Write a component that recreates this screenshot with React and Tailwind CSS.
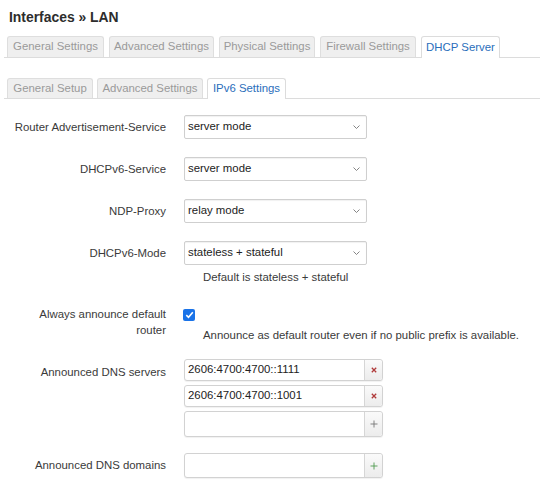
import React from "react";

const FONT = { fontFamily: '"Liberation Sans", Arial, Helvetica, sans-serif' };

function Tab({ label, width, active, h }) {
  if (active) {
    return (
      <div
        className={`flex items-center justify-center bg-white border border-b-0 border-[#dcdcdc] rounded-t-[3px] text-[#2a6ebb] mb-[-1px] ${h === 20 ? "h-[21px]" : "h-[22px]"}`}
        style={{ width }}
      >
        {label}
      </div>
    );
  }
  return (
    <div
      className={`flex items-center justify-center bg-[#efefef] border border-b-0 border-[#dedede] rounded-t-[3px] text-[#9a9a9a] ${h === 20 ? "h-[20px]" : "h-[21px]"}`}
      style={{ width }}
    >
      {label}
    </div>
  );
}

function Select({ value }) {
  return (
    <div className="w-[183px] h-[24px] border border-[#cfcfcf] rounded-[2px] bg-white flex items-center justify-between pl-[3px] pr-[6px] text-[#222] shadow-[inset_0_1px_1px_rgba(0,0,0,0.06)]">
      <span>{value}</span>
      <svg width="7" height="4" viewBox="0 0 7 4" fill="none">
        <path d="M0.5 0.5 L3.5 3.5 L6.5 0.5" stroke="#777" strokeWidth="0.9" />
      </svg>
    </div>
  );
}

function DynInput({ value, kind, h }) {
  return (
    <div
      className="w-[199px] border border-[#d2d2d2] rounded-[3px] bg-white flex shadow-[0_1px_1px_rgba(0,0,0,0.06)]"
      style={{ height: h }}
    >
      <div className="flex-1 flex items-center pl-[3px] text-[#222]">{value}</div>
      <div className="w-[18px] border-l border-[#d6d6d6] bg-gradient-to-b from-[#fafafa] to-[#ececec] rounded-r-[3px] flex items-center justify-center">
        {kind === "x" && (
          <svg width="6" height="6" viewBox="0 0 6 6">
            <path d="M0.8 0.8 L5.2 5.2 M5.2 0.8 L0.8 5.2" stroke="#b03a3a" strokeWidth="1.3" />
          </svg>
        )}
        {kind === "plus" && (
          <svg width="8" height="8" viewBox="0 0 8 8">
            <path d="M4 0.5 V7.5 M0.5 4 H7.5" stroke="#777" strokeWidth="0.9" />
          </svg>
        )}
        {kind === "plusg" && (
          <svg width="8" height="8" viewBox="0 0 8 8">
            <path d="M4 0.5 V7.5 M0.5 4 H7.5" stroke="#4e9a4e" strokeWidth="0.9" />
          </svg>
        )}
      </div>
    </div>
  );
}

function Row({ label, children, className = "", labelClass = "" }) {
  return (
    <div className={`flex ${className}`}>
      <div className={`w-[166px] shrink-0 text-right whitespace-nowrap text-[#3a3a3a] ${labelClass}`}>{label}</div>
      <div className="ml-[18px]">{children}</div>
    </div>
  );
}

export default function App() {
  return (
    <div className="w-[540px] h-[492px] bg-white overflow-hidden text-[11.4px] text-[#333]" style={FONT}>
      <div className="pt-[8px] pl-[9px] text-[13.9px] leading-[18px] font-bold text-[#2d2d2d]">
        Interfaces » LAN
      </div>

      <div className="mt-[10px] ml-[4px] flex items-end gap-[5px] pl-[3px] border-b border-[#dcdcdc]">
        <Tab label="General Settings" width={97} />
        <Tab label="Advanced Settings" width={105} />
        <Tab label="Physical Settings" width={96} />
        <Tab label="Firewall Settings" width={96} />
        <Tab label="DHCP Server" width={79} active />
      </div>

      <div className="mt-[20px] ml-[4px] flex items-end gap-[4px] pl-[3px] border-b border-[#dcdcdc]">
        <Tab label="General Setup" width={86} h={20} />
        <Tab label="Advanced Settings" width={106} h={20} />
        <Tab label="IPv6 Settings" width={79} h={20} active />
      </div>

      <div className="mt-[16px]">
        <Row label="Router Advertisement-Service" labelClass="leading-[24px]">
          <Select value="server mode" />
        </Row>
        <Row label="DHCPv6-Service" className="mt-[18px]" labelClass="leading-[24px]">
          <Select value="server mode" />
        </Row>
        <Row label="NDP-Proxy" className="mt-[18px]" labelClass="leading-[24px]">
          <Select value="relay mode" />
        </Row>
        <Row label="DHCPv6-Mode" className="mt-[18px]" labelClass="leading-[24px]">
          <Select value="stateless + stateful" />
          <div className="mt-[4px] ml-[19px] leading-[16px] text-[#3a3a3a]">Default is stateless + stateful</div>
        </Row>

        <Row
          label={
            <>
              Always announce default
              <br />
              router
            </>
          }
          className="mt-[21px]"
          labelClass="leading-[16px]"
        >
          <div className="pt-[3px] ml-[-1px]">
            <div className="w-[12px] h-[12px] rounded-[2px] bg-[#1a73e8] flex items-center justify-center">
              <svg width="9" height="8" viewBox="0 0 9 8" fill="none">
                <path d="M1.3 4.2 L3.5 6.3 L7.8 1.3" stroke="white" strokeWidth="1.6" />
              </svg>
            </div>
          </div>
          <div className="mt-[6px] ml-[19px] leading-[16px] whitespace-nowrap text-[#3a3a3a]">
            Announce as default router even if no public prefix is available.
          </div>
        </Row>

        <Row label="Announced DNS servers" className="mt-[16px]" labelClass="leading-[22px] pt-[2px]">
          <div className="flex flex-col gap-[4px]">
            <DynInput value="2606:4700:4700::1111" kind="x" h={22} />
            <DynInput value="2606:4700:4700::1001" kind="x" h={22} />
            <DynInput value="" kind="plus" h={26} />
          </div>
        </Row>

        <Row label="Announced DNS domains" className="mt-[16px]" labelClass="leading-[25px]">
          <DynInput value="" kind="plusg" h={25} />
        </Row>
      </div>
    </div>
  );
}
